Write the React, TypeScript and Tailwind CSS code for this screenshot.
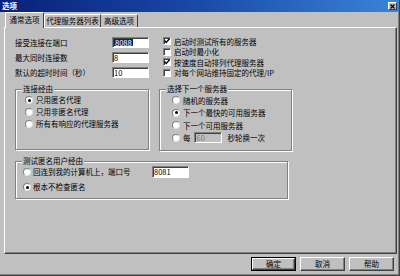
import React from "react";

const sunken =
  "bg-white border border-t-[#808080] border-l-[#808080] border-r-white border-b-white shadow-[inset_1px_1px_0_#404040]";

function Check({ on, label }: { on?: boolean; label: string }) {
  return (
    <div className="h-[10.5px] flex items-center gap-[3px]">
      <span className={`w-[8px] h-[8px] flex items-center justify-center ${sunken}`}>
        {on && (
          <svg width="6" height="6" viewBox="0 0 6 6">
            <polyline points="0.5,2.5 2.2,4.5 5.5,0.8" fill="none" stroke="#000" strokeWidth="1.3" />
          </svg>
        )}
      </span>
      <span>{label}</span>
    </div>
  );
}

function Radio({ on }: { on?: boolean }) {
  return (
    <span className="w-[8px] h-[8px] rounded-full bg-white border border-t-[#808080] border-l-[#808080] border-r-[#e0e0e0] border-b-[#e0e0e0] flex items-center justify-center shrink-0">
      {on && <span className="w-[3px] h-[3px] rounded-full bg-black" />}
    </span>
  );
}

function Field({ label, value, sel }: { label: string; value: string; sel?: boolean }) {
  return (
    <div className="h-[11px] flex items-center justify-between">
      <span>{label}</span>
      <span className={`w-[37px] h-[11px] flex items-center pl-[1px] leading-none ${sunken}`}>
        {sel ? <span className="bg-[#0a246a] text-white px-[1px]">{value}</span> : value}
      </span>
    </div>
  );
}

function Group({ title, className, children }: { title: string; className: string; children: React.ReactNode }) {
  return (
    <fieldset
      className={`border border-[#808080] shadow-[1px_1px_0_#fff,inset_1px_1px_0_#fff] ${className}`}
    >
      <legend className="ml-[6px] px-[1px] h-[10px] leading-[10px] bg-[#c0c0c0] relative">{title}</legend>
      {children}
    </fieldset>
  );
}

function Button({ label, def }: { label: string; def?: boolean }) {
  return (
    <div className={def ? "border border-black" : ""}>
      <div
        className={`${def ? "w-[43px] h-[12px]" : "w-[45px] h-[14px]"} flex items-center justify-center bg-[#c0c0c0] border border-t-white border-l-white border-r-[#404040] border-b-[#404040] shadow-[inset_-1px_-1px_0_#808080]`}
      >
        {label}
      </div>
    </div>
  );
}

export default function App() {
  return (
    <div
      className="w-[400px] h-[276px] bg-[#c0c0c0] flex flex-col border-r border-b border-[#404040] shadow-[inset_-1px_-1px_0_#808080] text-[7.5px] text-black leading-none"
      style={{ fontFamily: '"Noto Sans CJK SC", "Noto Sans", sans-serif' }}
    >
      {/* title bar */}
      <div className="h-[12px] bg-gradient-to-r from-[#0a1f78] via-[#1a4aa8] to-[#3b84d8] flex items-center justify-between pl-[2px] pr-[2px]">
        <span className="text-white font-bold">选项</span>
        <span className="w-[9px] h-[8px] bg-[#c0c0c0] border border-t-white border-l-white border-r-[#404040] border-b-[#404040] flex items-center justify-center">
          <svg width="5" height="5" viewBox="0 0 5 5">
            <path d="M0.5 0.5L4.5 4.5M4.5 0.5L0.5 4.5" stroke="#000" strokeWidth="1.2" />
          </svg>
        </span>
      </div>

      {/* tabs */}
      <div className="h-[15px] flex items-end pl-[5px]">
        <div className="relative z-10 w-[39px] h-[16px] -mb-[1px] bg-[#c0c0c0] border-l border-t border-white border-r border-r-[#404040] rounded-t-[2px] flex items-center justify-center pb-[1px]">
          通常选项
        </div>
        <div className="w-[57px] h-[13px] border-t border-l border-white border-r border-r-[#404040] rounded-t-[2px] flex items-center justify-center">
          代理服务器列表
        </div>
        <div className="w-[37px] h-[13px] border-t border-white border-r border-r-[#404040] rounded-t-[2px] flex items-center justify-center">
          高级选项
        </div>
      </div>

      {/* panel */}
      <div className="ml-[4px] mr-[2px] h-[227px] border border-t-white border-l-white border-r-[#404040] border-b-[#404040] shadow-[inset_-1px_-1px_0_#808080] pl-[10px] pt-[9px]">
        <div className="flex items-start">
          <div className="w-[134px] flex flex-col gap-[4px]">
            <Field label="接受连接在端口" value="8088" sel />
            <Field label="最大同时连接数" value="8" />
            <Field label="默认的超时时间（秒）" value="10" />
          </div>
          <div className="ml-[14px] -mt-[1px] flex flex-col">
            <Check on label="启动时测试所有的服务器" />
            <Check label="启动时最小化" />
            <Check on label="按速度自动排列代理服务器" />
            <Check label="对每个网站维持固定的代理/IP" />
          </div>
        </div>

        <div className="mt-[6px] flex items-start gap-[10px]">
          <Group title="连接经由" className="w-[134px] h-[66px]">
            <div className="pl-[9px] flex flex-col">
              <div className="h-[12px] flex items-center gap-[3px]"><Radio on />只用匿名代理</div>
              <div className="h-[12px] flex items-center gap-[3px]"><Radio />只用非匿名代理</div>
              <div className="h-[12px] flex items-center gap-[3px]"><Radio />所有有响应的代理服务器</div>
            </div>
          </Group>
          <Group title="选择下一个服务器" className="w-[133px] h-[67px]">
            <div className="pl-[12px] flex flex-col">
              <div className="h-[12.5px] flex items-center gap-[3px]"><Radio />随机的服务器</div>
              <div className="h-[12.5px] flex items-center gap-[3px]"><Radio on />下一个最快的可用服务器</div>
              <div className="h-[12.5px] flex items-center gap-[3px]"><Radio />下一个可用服务器</div>
              <div className="h-[12.5px] flex items-center gap-[3px]">
                <Radio />每
                <span className="w-[28px] h-[11px] flex items-center pl-[2px] text-[#808080] bg-[#c0c0c0] border border-t-[#808080] border-l-[#808080] border-r-white border-b-white shadow-[inset_1px_1px_0_#404040]">
                  60
                </span>
                <span className="ml-[3px]">秒轮换一次</span>
              </div>
            </div>
          </Group>
        </div>

        <Group title="测试匿名用户经由" className="mt-[5px] w-[273px] h-[43px]">
          <div className="pl-[7px] flex flex-col">
            <div className="h-[12px] grid grid-cols-[129px_auto] items-center">
              <div className="flex items-center gap-[2px]"><Radio />回连到我的计算机上，端口号</div>
              <span className={`w-[37px] h-[12px] flex items-center pl-[1px] ${sunken}`}>8081</span>
            </div>
            <div className="h-[3px]" />
            <div className="h-[12px] flex items-center gap-[2px]"><Radio on />根本不检查匿名</div>
          </div>
        </Group>
      </div>

      {/* buttons */}
      <div className="flex-1 flex items-start justify-end gap-[4px] pt-[3px] pr-[5px]">
        <Button label="确定" def />
        <Button label="取消" />
        <Button label="帮助" />
      </div>
    </div>
  );
}
